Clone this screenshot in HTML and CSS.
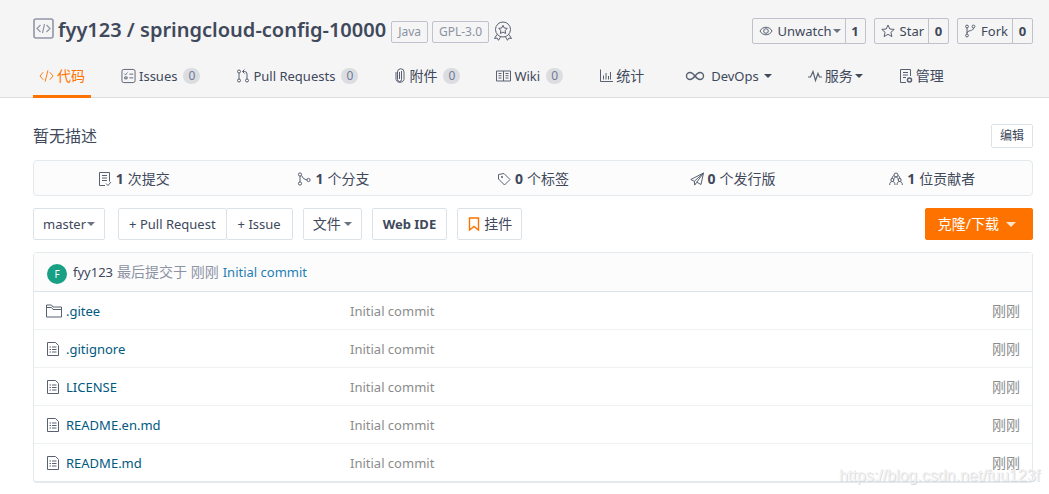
FILE: index.html
```html
<!DOCTYPE html>
<html lang="zh-CN">
<head>
<meta charset="utf-8">
<meta name="viewport" content="width=device-width, initial-scale=1">
<title>fyy123 / springcloud-config-10000</title>
<link rel="stylesheet" href="styles.css">
</head>
<body>
<svg class="sprite" aria-hidden="true">
  <symbol id="i-file" viewBox="0 0 14 16"><path d="M1.500 1.500h8l3 3v10h-11zM3.500 6h1.500M6 6h4.500M3.500 8.500h1.500M6 8.500h4.500M3.500 11h1.500M6 11h4.500"/></symbol>
</svg>
<header class="header">
  <div class="title-row">
    <svg class="icon repo-icon" viewBox="0 0 22 22"><rect x="1" y="1" width="19" height="19" rx="2" stroke-width="1.600"/><path d="M7.500 7L4 10.500L7.500 14M13.500 7L17 10.500L13.500 14M11.500 6L9.500 15" stroke-width="1.200"/></svg>
    <h1 class="title"><a href="#">fyy123</a> / <a href="#">springcloud-config-10000</a></h1>
    <a class="tag" href="#">Java</a>
    <a class="tag" href="#">GPL-3.0</a>
    <svg class="icon medal" viewBox="0 0 20 20"><circle cx="10" cy="8.500" r="7.500"/><path d="M10 4.300l1.300 2.700 3 .4-2.200 2.100.5 3-2.600-1.400-2.600 1.400.5-3L5.700 7.400l3-.4zM4 13.500L1.500 17.500l2.700-.4L5.500 19.300L7.500 16M16 13.500l2.500 4-2.700-.4-1.300 2.200-2-3.300"/></svg>
    <div class="actions">
      <div class="action"><button type="button"><svg class="icon s14" viewBox="0 0 14 14"><path d="M1 7C3.500 2 10.500 2 13 7C10.500 12 3.500 12 1 7z"/><circle cx="7" cy="7" r="2.300"/></svg><span>Unwatch</span><i class="caret"></i></button><a href="#">1</a></div>
      <div class="action"><button type="button"><svg class="icon s14" viewBox="0 0 14 14"><path d="M7 1l1.800 4 4.400.4-3.300 2.900 1 4.300L7 10.300l-3.900 2.300 1-4.300L.8 5.400 5.200 5z"/></svg><span>Star</span></button><a href="#">0</a></div>
      <div class="action"><button type="button"><svg class="icon s12" viewBox="0 0 12 14"><circle cx="3" cy="2.500" r="1.400"/><circle cx="9.500" cy="2.500" r="1.400"/><circle cx="3" cy="11.500" r="1.400"/><path d="M3 4v6M9.500 4c0 3.500-6.500 2-6.500 5"/></svg><span>Fork</span></button><a href="#">0</a></div>
    </div>
  </div>
  <nav class="nav">
    <a class="item cn active" href="#"><svg class="icon s15" viewBox="0 0 16 16"><path d="M4.500 4L1 8l3.500 4M11.500 4L15 8l-3.500 4M9.500 2L6.500 14"/></svg>代码</a>
    <a class="item" href="#"><svg class="icon s15" viewBox="0 0 16 16"><rect x="1" y="1" width="14" height="14" rx="2"/><path d="M3.500 5.500l1.200 1.200L7 4.500M9 6h4M9 10h4M4 9h2.500v2H4z"/></svg>Issues <span class="badge">0</span></a>
    <a class="item" href="#"><svg class="icon s14" viewBox="0 0 14 14"><circle cx="3" cy="2.500" r="1.500"/><circle cx="3" cy="11.500" r="1.500"/><circle cx="11" cy="11.500" r="1.500"/><path d="M3 4v6M11 10V5q0-2.500-2.500-2.500H6.500M8.500.5l-2 2 2 2"/></svg>Pull Requests <span class="badge">0</span></a>
    <a class="item cn" href="#"><svg class="icon s12" viewBox="0 0 12 16"><path d="M3.500 4v7.500a2 2 0 0 0 4 0V3M3.500 4a2.800 2.800 0 0 1 6.500 0v7.500a4.200 4.200 0 0 1-8 0V4M5.500 4v7"/></svg>附件 <span class="badge">0</span></a>
    <a class="item" href="#"><svg class="icon s15" viewBox="0 0 15 14"><path d="M.5 2h14v10H.5zM7.500 2v10M2.500 4.500h3M2.500 6.700h3M2.500 9h3M9.500 4.500h3M9.500 6.700h3M9.500 9h3"/></svg>Wiki <span class="badge">0</span></a>
    <a class="item cn" href="#"><svg class="icon s14" viewBox="0 0 14 14"><path d="M1.500.5v12H14M4.500 6.500v4M7 4v6.500M9.500 7v3.500M11.500 3v7.500"/></svg>统计</a>
    <a class="item devops" href="#"><svg class="icon s20" viewBox="0 0 20 14"><path stroke-width="1.400" d="M10 7C8.500 5 7 3.500 5 3.500a3.500 3.500 0 0 0 0 7C7 10.500 8.500 9 10 7S13 3.500 15 3.500a3.500 3.500 0 0 1 0 7C13 10.500 11.500 9 10 7z"/></svg>DevOps<i class="caret"></i></a>
    <a class="item cn" href="#"><svg class="icon s14" viewBox="0 0 14 14"><path stroke-width="1.200" d="M0 8h2.500L5 2.500 7.500 11.500 10 4.500 11.500 8H14"/></svg>服务<i class="caret"></i></a>
    <a class="item cn" href="#"><svg class="icon s14" viewBox="0 0 14 16"><path d="M7 14.500H1.500v-13h10V8M4 4.500h5M4 7h5M4 9.500h3"/><circle cx="10.500" cy="12" r="2" stroke-width="1.500"/></svg>管理</a>
  </nav>
</header>
<main class="main">
  <div class="desc"><span>暂无描述</span><button class="edit" type="button">编辑</button></div>
  <div class="stats">
    <a href="#"><svg class="icon s14" viewBox="0 0 14 16"><path d="M7 14.500H1.500v-13h10v9M4 4.500h5M4 7h5M4 9.500h5M8 12.500l2 2 3-3.500"/></svg><b>1</b> 次提交</a>
    <a href="#"><svg class="icon s14" viewBox="0 0 14 14"><circle cx="3" cy="2.500" r="1.600"/><circle cx="3" cy="11.500" r="1.600"/><circle cx="11.500" cy="8" r="1.600"/><path d="M3 4v6M4.500 3.500Q6 7.500 10 8"/></svg><b>1</b> 个分支</a>
    <a href="#"><svg class="icon s14" viewBox="0 0 14 14"><path d="M1.500 2.500L7 1.500l6 6-5.500 5.500-6-6z"/><circle cx="5" cy="5" r=".7"/></svg><b>0</b> 个标签</a>
    <a href="#"><svg class="icon s14" viewBox="0 0 14 14"><path d="M13.500 1L.8 7.500l3.500 1.800L13.500 1 11 12.500 6.800 10.200 13.500 1M4.300 9.300l.4 3.800 2.100-2.900"/></svg><b>0</b> 个发行版</a>
    <a href="#"><svg class="icon s14" viewBox="0 0 14 14"><circle cx="7" cy="3" r="2"/><path d="M4.700 8C4.700 6 6 5 7 5s2.300 1 2.300 3M4.500 3.500L2.500 7M9.500 3.500l2 3.500M.7 13c0-2.500 1-3.500 2.600-3.500S6 10.500 6 13M8 13c0-2.500 1-3.500 2.700-3.500S13.300 10.500 13.300 13"/><circle cx="3.300" cy="8" r="1.500"/><circle cx="10.700" cy="8" r="1.500"/></svg><b>1</b> 位贡献者</a>
  </div>
  <div class="toolbar">
    <button class="btn branch" type="button">master<i class="caret"></i></button>
    <div class="group"><button class="btn" type="button">+ Pull Request</button><button class="btn" type="button">+ Issue</button></div>
    <button class="btn cn" type="button">文件<i class="caret"></i></button>
    <button class="btn strong" type="button">Web IDE</button>
    <button class="btn cn widget" type="button"><svg class="icon s14" viewBox="0 0 14 14"><path stroke-width="1.400" d="M2.500 1h9v12L7 9.500 2.500 13z"/></svg>挂件</button>
    <button class="btn cn clone" type="button">克隆/下载<i class="caret"></i></button>
  </div>
  <section class="files">
    <div class="last"><span class="avatar">F</span><a class="user" href="#">fyy123</a> <span class="muted cn">最后提交于 刚刚</span> <a class="message" href="#">Initial commit</a></div>
    <table>
      <tbody>
        <tr><td class="name"><a href="#"><svg class="icon folder" viewBox="0 0 16 14"><path d="M.5 13V1h5l1.500 2h8.500v10zM1 3.500h4.500l1.500 2h8.500"/></svg>.gitee</a></td><td>Initial commit</td><td class="time cn">刚刚</td></tr>
        <tr><td class="name"><a href="#"><svg class="icon doc"><use href="#i-file"/></svg>.gitignore</a></td><td>Initial commit</td><td class="time cn">刚刚</td></tr>
        <tr><td class="name"><a href="#"><svg class="icon doc"><use href="#i-file"/></svg>LICENSE</a></td><td>Initial commit</td><td class="time cn">刚刚</td></tr>
        <tr><td class="name"><a href="#"><svg class="icon doc"><use href="#i-file"/></svg>README.en.md</a></td><td>Initial commit</td><td class="time cn">刚刚</td></tr>
        <tr><td class="name"><a href="#"><svg class="icon doc"><use href="#i-file"/></svg>README.md</a></td><td>Initial commit</td><td class="time cn">刚刚</td></tr>
      </tbody>
    </table>
  </section>
</main>
<div class="watermark">https://blog.csdn.net/fuu123f</div>
</body>
</html>
```
FILE: styles.css
```css
* { box-sizing: border-box; }
body {
  margin: 0;
  position: relative;
  background: #fff;
  color: #40485b;
  font: 13px/20px "Noto Sans", "Noto Sans CJK SC", sans-serif;
}
a { color: inherit; text-decoration: none; }
button { font: inherit; color: inherit; background: none; border: 0; padding: 0; cursor: pointer; }
.cn { font-size: 14px; }
.sprite { display: none; }
.icon { flex: none; height: 16px; fill: none; stroke: currentColor; stroke-width: 1; color: #596072; }
.s12 { width: 12px; }
.s14 { width: 14px; }
.s15 { width: 15px; }
.s20 { width: 20px; }
.caret {
  flex: none;
  border: 4px solid transparent;
  border-top-color: currentColor;
  border-bottom: 0;
}

.header {
  background: #f5f5f5;
  border-bottom: 1px solid #dcdde0;
  padding: 14px 16px 0 33px;
}
.title-row { display: flex; align-items: center; height: 34px; }
.repo-icon { width: 22px; height: 22px; color: #9297a6; margin-right: 3px; margin-bottom: 4px; }
.title { margin: 0 5px 2px 0; font-size: 20px; line-height: 28px; font-weight: 600; white-space: nowrap; }
.tag {
  height: 22px;
  margin: 2px 4px 0 0;
  padding: 0 6px;
  border: 1px solid #bfc2cc;
  border-radius: 2px;
  color: #8c92a4;
  font-size: 12px;
  line-height: 20px;
  white-space: nowrap;
}
.medal { width: 20px; height: 20px; }
.actions { display: flex; gap: 8px; margin-left: auto; }
.action { display: flex; height: 26px; border: 1px solid #bfc2cc; border-radius: 2px; }
.action button { display: flex; align-items: center; gap: 5px; padding: 0 4px 0 6px; }
.action .caret { margin-left: -4px; color: #6b7282; }
.action a { width: 20px; border-left: 1px solid #bfc2cc; text-align: center; line-height: 24px; font-weight: 700; }

.nav { display: flex; gap: 24px; padding-top: 6px; }
.item {
  display: flex;
  align-items: center;
  gap: 3px;
  height: 44px;
  padding: 3px 6px 0;
  border-bottom: 3px solid transparent;
  margin-bottom: -1px;
  white-space: nowrap;
}
.active, .active .icon { color: #fe7300; }
.active { border-color: #fe7300; }
.item .caret { margin-left: -1px; }
.devops { gap: 6px; padding-left: 11px; }
.badge {
  min-width: 17px;
  height: 16px;
  margin-left: 3px;
  border-radius: 8px;
  background: #dcdde0;
  color: #6e7a99;
  font-size: 12px;
  line-height: 16px;
  text-align: center;
}

.main { padding: 26px 16px 11px 33px; }
.desc { display: flex; align-items: center; justify-content: space-between; height: 24px; font-size: 16px; }
.edit { height: 24px; padding: 0 8px; border: 1px solid #dce3e8; border-radius: 2px; font-size: 12px; }
.stats {
  display: grid;
  grid-template-columns: repeat(5, 1fr);
  margin: 12px 0;
  border: 1px solid #e3e9ed;
  border-radius: 4px;
  background: #fcfcfc;
}
.stats a { display: flex; align-items: center; justify-content: center; gap: 4px; height: 34px; padding-top: 2px; font-size: 14px; }
.toolbar { display: flex; gap: 10px; }
.btn {
  display: flex;
  align-items: center;
  gap: 3px;
  height: 32px;
  padding: 0 9px;
  border: 1px solid #dce3e8;
  border-radius: 2px;
  background: #fff;
  white-space: nowrap;
}
.btn .caret { color: #6b7282; }
.branch { margin-right: 3px; gap: 1px; }
.group { display: flex; }
.group .btn { padding: 0 10px; }
.group .btn + .btn { margin-left: -1px; padding: 0 11px; }
.strong { padding: 0 10px; font-weight: 700; }
.widget .icon { color: #fe7300; }
.clone { margin-left: auto; padding: 0 12px; gap: 7px; border-color: #fe7300; background: #fe7300; color: #fff; }
.clone .caret { border-width: 5px 5px 0; margin-right: 4px; color: #ffe3cc; }

.files { margin-top: 12px; border: 1px solid #e3e9ed; border-bottom-width: 2px; border-radius: 4px; }
.last { display: flex; align-items: center; gap: 4px; height: 39px; padding: 0 13px; background: #fcfcfc; border-bottom: 1px solid #dce3e8; }
.avatar {
  width: 20px;
  height: 20px;
  margin: 3px 2px 0 0;
  border-radius: 50%;
  background: #18a085;
  color: #fff;
  font-size: 10px;
  text-align: center;
}
.muted { color: #8c92a4; }
.message { color: #1f7fb5; }
.files table { width: 100%; border-collapse: collapse; }
.files td { height: 38px; padding: 2px 0 0; border-top: 1px solid #eff2f4; color: #8c8c8c; }
.files tr:first-child td { border-top: 0; height: 37px; }
.files .name { width: 316px; padding-left: 12px; color: #005980; }
.name a { display: flex; align-items: center; }
.folder { width: 16px; margin-right: 4px; }
.doc { width: 14px; margin-right: 6px; }
.files .time { padding-right: 12px; text-align: right; }
.watermark {
  position: absolute;
  right: 9px;
  bottom: 8px;
  color: #f0f0f0;
  text-shadow: 1px 1px 0 #d4d4d4;
  font: 16px/20px "Liberation Sans", sans-serif;
  opacity: .8;
}
```
